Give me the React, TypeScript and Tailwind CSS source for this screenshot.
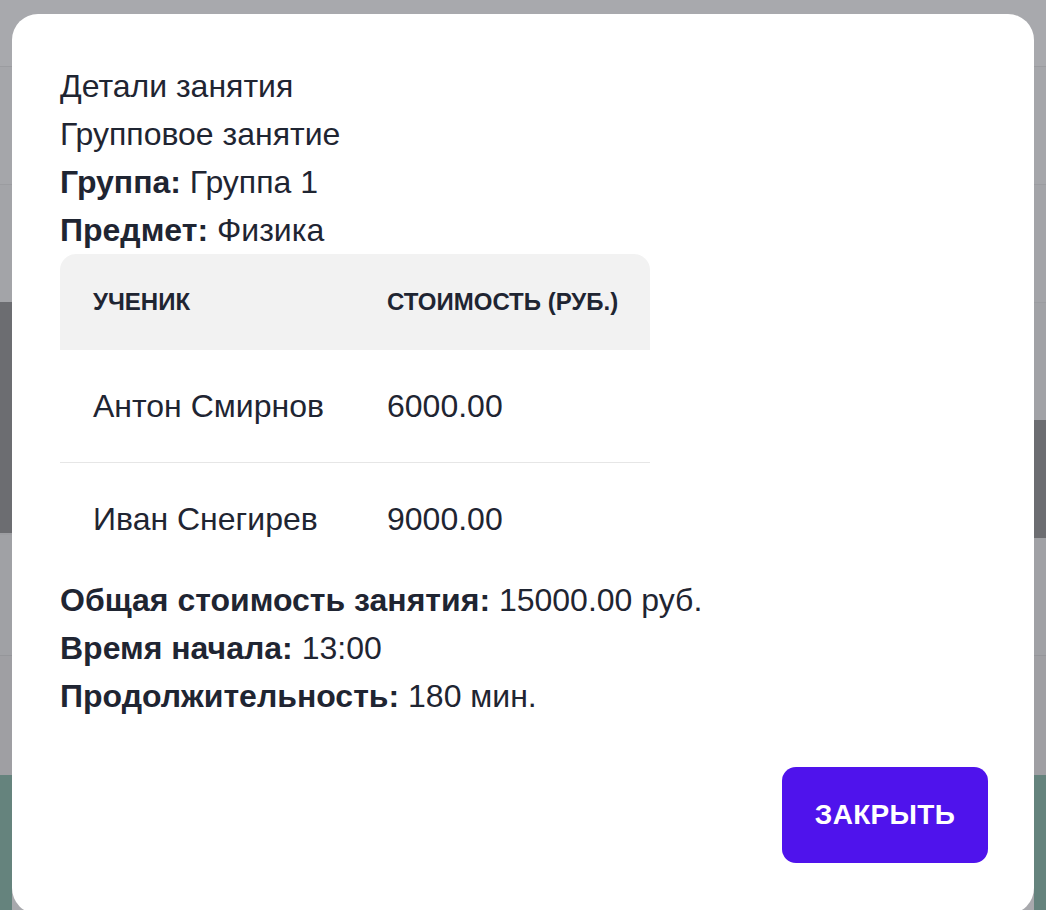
import React from "react";

const rows = [
  { name: "Антон Смирнов", price: "6000.00" },
  { name: "Иван Снегирев", price: "9000.00" },
];

function Band({ h, c }: { h: string; c: string }) {
  return <div className={`${h} ${c} w-full`} />;
}

function SideStrip({ right }: { right?: boolean }) {
  return (
    <div className="flex w-[12px] flex-col">
      <Band h="h-[66px]" c="bg-[#a8a9ad]" />
      <Band h="h-[1px]" c="bg-[#9b9ca0]" />
      <Band h="h-[117px]" c="bg-[#a5a6aa]" />
      <Band h="h-[1px]" c="bg-[#9b9ca0]" />
      {right ? (
        <>
          <Band h="h-[117px]" c="bg-[#a3a4a8]" />
          <Band h="h-[1px]" c="bg-[#9b9ca0]" />
          <Band h="h-[117px]" c="bg-[#a1a2a6]" />
          <Band h="h-[118px]" c="bg-[#6c6d71]" />
          <Band h="h-[117px]" c="bg-[#a0a1a5]" />
          <Band h="h-[1px]" c="bg-[#95969a]" />
          <Band h="h-[119px]" c="bg-[#9f9fa3]" />
        </>
      ) : (
        <>
          <Band h="h-[117px]" c="bg-[#a3a4a8]" />
          <Band h="h-[231px]" c="bg-[#6c6d71]" />
          <Band h="h-[2px]" c="bg-[#9c9da1]" />
          <Band h="h-[120px]" c="bg-[#a0a1a5]" />
          <Band h="h-[1px]" c="bg-[#95969a]" />
          <Band h="h-[119px]" c="bg-[#9f9fa3]" />
        </>
      )}
      <div className="w-full flex-1 bg-[#65837d]" />
    </div>
  );
}

export default function App() {
  return (
    <div className="relative h-[910px] w-full overflow-hidden bg-[#a8a9ad] font-['Liberation_Sans',Arial,sans-serif] text-[#1f2532]">
      {/* backdrop */}
      <div className="flex h-full w-full justify-between">
        <SideStrip />
        <SideStrip right />
      </div>

      {/* dialog */}
      <div className="absolute left-[12px] right-[12px] top-[14px] h-[900px] rounded-[26px] bg-white px-[48px] pt-[48px]">
        <div className="text-[32px] leading-[48px]">
          <p>Детали занятия</p>
          <p>Групповое занятие</p>
          <p>
            <b>Группа:</b> Группа 1
          </p>
          <p>
            <b>Предмет:</b> Физика
          </p>
        </div>

        <div className="w-[590px]">
          <div className="grid h-[96px] grid-cols-[327px_263px] items-center rounded-t-[16px] bg-[#f2f2f2] text-[24px] font-bold uppercase">
            <span className="pl-[33px]">Ученик</span>
            <span>Стоимость (руб.)</span>
          </div>
          {rows.map((r, i) => (
            <div
              key={r.name}
              className={`grid grid-cols-[327px_263px] py-[32px] text-[32px] leading-[48px] ${
                i === 0 ? "border-b-[1.5px] border-[#e6e6e6]" : "border-b border-white"
              }`}
            >
              <span className="pl-[33px]">{r.name}</span>
              <span>{r.price}</span>
            </div>
          ))}
        </div>

        <div className="text-[32px] leading-[48px]">
          <p>
            <b>Общая стоимость занятия:</b> 15000.00 руб.
          </p>
          <p>
            <b>Время начала:</b> 13:00
          </p>
          <p>
            <b>Продолжительность:</b> 180 мин.
          </p>
        </div>

        <div className="mt-[47px] flex justify-end">
          <button className="-mr-[2px] flex h-[96px] w-[206px] items-center justify-center rounded-[14px] bg-[#4f13ec] text-[28px] font-bold tracking-[0.3px] text-white uppercase">
            Закрыть
          </button>
        </div>
      </div>
    </div>
  );
}
